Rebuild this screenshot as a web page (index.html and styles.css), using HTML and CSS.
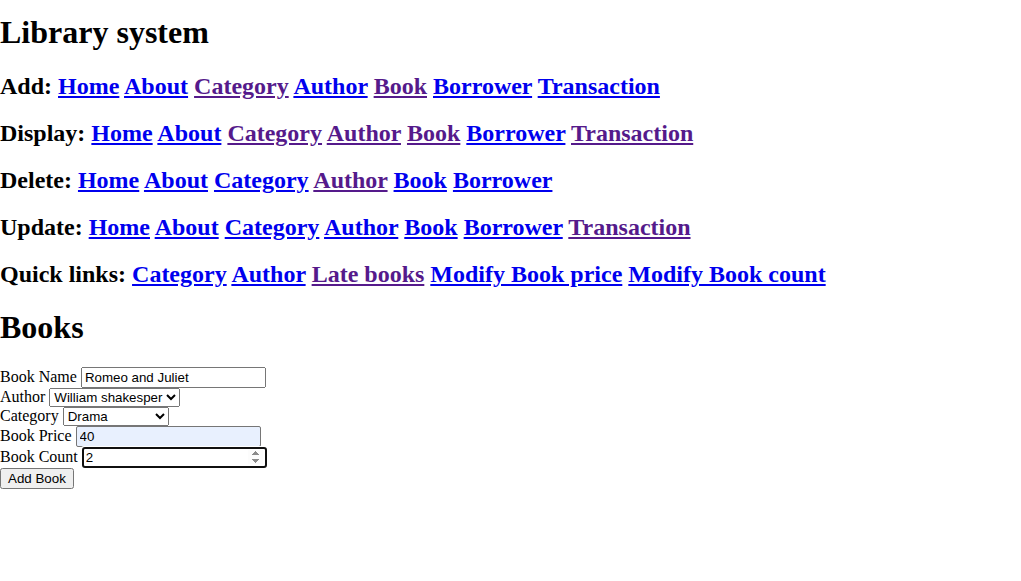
FILE: index.html
```html
<!DOCTYPE html>
<html>
<head>
<meta charset="utf-8">
<title>Library system</title>
<link rel="stylesheet" href="styles.css">
</head>
<body>
<h1 class="title">Library system</h1>
<h2 class="nav">Add: <a href="#">Home</a> <a href="#">About</a> <a class="v" href="#">Category</a> <a href="#">Author</a> <a class="v" href="#">Book</a> <a href="#">Borrower</a> <a href="#">Transaction</a></h2>
<h2 class="nav">Display: <a href="#">Home</a> <a href="#">About</a> <a class="v" href="#">Category</a> <a class="v" href="#">Author</a> <a class="v" href="#">Book</a> <a href="#">Borrower</a> <a class="v" href="#">Transaction</a></h2>
<h2 class="nav">Delete: <a href="#">Home</a> <a href="#">About</a> <a href="#">Category</a> <a class="v" href="#">Author</a> <a href="#">Book</a> <a href="#">Borrower</a></h2>
<h2 class="nav">Update: <a href="#">Home</a> <a href="#">About</a> <a href="#">Category</a> <a href="#">Author</a> <a href="#">Book</a> <a href="#">Borrower</a> <a class="v" href="#">Transaction</a></h2>
<h2 class="nav">Quick links: <a href="#">Category</a> <a href="#">Author</a> <a class="v" href="#">Late books</a> <a href="#">Modify Book price</a> <a href="#">Modify Book count</a></h2>
<h1 class="section">Books</h1>
<form class="form">
<label>Book Name <input type="text" class="field" value="Romeo and Juliet"></label><br>
<label>Author <select class="sel"><option>William shakesper</option></select></label><br>
<label>Category <select class="sel sel-cat"><option>Drama</option></select></label><br>
<label>Book Price <input type="text" class="field autofill" value="40"></label><br>
<label>Book Count <input type="number" class="field" value="2" autofocus></label><br>
<button type="button" class="btn">Add Book</button>
</form>
</body>
</html>
```

FILE: styles.css
```css
body {
  margin: 0;
  font-family: "Liberation Serif", "Times New Roman", serif;
  color: #000;
  background: #fff;
}
.title {
  font-size: 32px;
  margin: 14px 0 22px;
  line-height: 37px;
}
.nav {
  font-size: 24px;
  line-height: 27px;
  margin: 20px 0;
}
.nav a {
  color: #0000ee;
}
.nav a.v {
  color: #551a8b;
}
.section {
  font-size: 32px;
  line-height: 37px;
  margin: 21px 0;
}
.form {
  font-size: 16px;
}
.field, .sel, .btn {
  font-family: "Liberation Sans", Arial, sans-serif;
  font-size: 13.333px;
}
.sel-cat { width: 106px; }
.autofill {
  background: #e8f0fe;
  border: 1px solid #767676;
  border-radius: 2px;
  padding: 2px 3px;
}
```
